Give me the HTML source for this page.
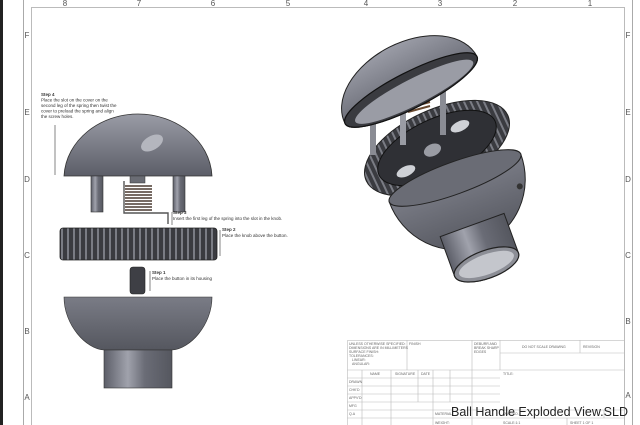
<!DOCTYPE html>
<html><head><meta charset="utf-8"><style>
html,body{margin:0;padding:0;background:#fff;}
svg{display:block;font-family:"Liberation Sans",sans-serif;}
</style></head><body>
<svg width="640" height="425" viewBox="0 0 640 425" xmlns="http://www.w3.org/2000/svg">
<defs>
<linearGradient id="dome" x1="0" y1="0" x2="0" y2="1"><stop offset="0" stop-color="#9a9ca6"/><stop offset="1" stop-color="#5c5e68"/></linearGradient>
<linearGradient id="domeb" x1="0" y1="0" x2="0" y2="1"><stop offset="0" stop-color="#7a7c86"/><stop offset="1" stop-color="#55575f"/></linearGradient>
<linearGradient id="cyl" x1="0" y1="0" x2="1" y2="0"><stop offset="0" stop-color="#5c5e68"/><stop offset=".35" stop-color="#a0a2ac"/><stop offset=".6" stop-color="#6a6c76"/><stop offset="1" stop-color="#55575f"/></linearGradient>
<pattern id="knurl" width="6" height="10" patternUnits="userSpaceOnUse"><rect width="6" height="10" fill="#3a3b40"/><rect x="1" width="2" height="10" fill="#7a7c84"/></pattern>
</defs>
<rect width="640" height="425" fill="#fff"/>
<rect x="0" y="0" width="3" height="425" fill="#222"/>
<rect x="23.5" y="-1" width="609" height="430" fill="none" stroke="#aaa" stroke-width="1"/>
<rect x="31.5" y="7.5" width="593" height="430" fill="none" stroke="#bbb" stroke-width="1"/>
<g font-size="8" fill="#555" text-anchor="middle">
<text x="65" y="6">8</text><text x="139" y="6">7</text><text x="213" y="6">6</text><text x="288" y="6">5</text><text x="366" y="6">4</text><text x="440" y="6">3</text><text x="515" y="6">2</text><text x="590" y="6">1</text>
<text x="27" y="38">F</text><text x="27" y="115">E</text><text x="27" y="182">D</text><text x="27" y="258">C</text><text x="27" y="334">B</text><text x="27" y="400">A</text>
<text x="628" y="38">F</text><text x="628" y="115">E</text><text x="628" y="182">D</text><text x="628" y="258">C</text><text x="628" y="324">B</text><text x="628" y="398">A</text>
</g>
<!-- left assembly -->
<path d="M64,176 C66,140 100,114 138,114 C176,114 210,140 212,176 Z" fill="url(#dome)" stroke="#333" stroke-width=".8"/>
<ellipse cx="152" cy="143" rx="12" ry="7" fill="#b4b6be" transform="rotate(-30 152 143)"/>
<rect x="91" y="176" width="12" height="36" fill="url(#cyl)" stroke="#333" stroke-width=".6"/>
<rect x="173" y="176" width="12" height="36" fill="url(#cyl)" stroke="#333" stroke-width=".6"/>
<rect x="130" y="176" width="15" height="7" fill="#6a6c74" stroke="#333" stroke-width=".5"/>
<g stroke="#4a3a30" stroke-width="1.6">
<line x1="125" y1="186" x2="152" y2="186"/><line x1="125" y1="189" x2="152" y2="189"/><line x1="125" y1="192" x2="152" y2="192"/><line x1="125" y1="195" x2="152" y2="195"/><line x1="125" y1="198" x2="152" y2="198"/><line x1="125" y1="201" x2="152" y2="201"/><line x1="125" y1="204" x2="152" y2="204"/><line x1="125" y1="207" x2="152" y2="207"/><line x1="125" y1="210" x2="152" y2="210"/>
</g>
<path d="M124,181 L124,213 L168,213 L168,224" fill="none" stroke="#555" stroke-width="1.4"/>
<rect x="60" y="228" width="157" height="32" rx="3" fill="url(#knurl)" stroke="#222" stroke-width=".8"/>
<rect x="130" y="267" width="15" height="27" rx="3" fill="#3e3f45" stroke="#222" stroke-width=".6"/>
<path d="M64,297 L212,297 C212,325 190,349 172,350 L104,350 C86,349 64,325 64,297 Z" fill="url(#domeb)" stroke="#333" stroke-width=".6"/>
<rect x="104" y="350" width="68" height="38" fill="url(#cyl)" stroke="#333" stroke-width=".6"/>
<g stroke="#333" stroke-width=".6"><line x1="55" y1="125" x2="55" y2="175"/><line x1="172" y1="212" x2="172" y2="225"/><line x1="220" y1="230" x2="220" y2="256"/><line x1="150" y1="271" x2="150" y2="291"/></g>
<g font-size="4.5" fill="#333">
<text x="41" y="96" font-weight="bold">Step 4</text>
<text x="41" y="101.5">Place the slot on the cover on the</text>
<text x="41" y="107">second leg of the spring then twist the</text>
<text x="41" y="112.5">cover to preload the spring and align</text>
<text x="41" y="118">the screw holes.</text>
<text x="173" y="214" font-weight="bold">Step 3</text>
<text x="173" y="220">Insert the first leg of the spring into the slot in the knob.</text>
<text x="222" y="231" font-weight="bold">Step 2</text>
<text x="222" y="237">Place the knob above the button.</text>
<text x="152" y="274" font-weight="bold">Step 1</text>
<text x="152" y="280">Place the button in its housing</text>
</g>
<!-- right 3D exploded -->
<g transform="translate(437,148) rotate(-25)">
<ellipse cx="0" cy="0" rx="78" ry="38" fill="url(#knurl)" stroke="#222"/>
<ellipse cx="0" cy="0" rx="64" ry="29" fill="#2f3035" stroke="#111"/>
<ellipse cx="-5" cy="0" rx="9" ry="6" fill="#9a9ca4"/>
<ellipse cx="-38" cy="8" rx="10" ry="5" fill="#cfd1d6"/>
<ellipse cx="30" cy="-10" rx="10" ry="5" fill="#cfd1d6"/>
</g>
<rect x="400" y="85" width="6" height="60" fill="#9a9ca4"/><rect x="440" y="75" width="6" height="60" fill="#8a8c94"/><rect x="370" y="110" width="6" height="45" fill="#8a8c94"/>
<path d="M408,100 l22,-6 M408,104 l22,-6 M408,108 l22,-6 M408,112 l22,-6" stroke="#6a4a30" stroke-width="2"/>
<g transform="translate(411,90) rotate(-27)">
<path d="M-74,0 A74,48 0 0 1 74,0 A74,18 0 0 1 -74,0 Z" fill="url(#dome)" stroke="#222"/>
<ellipse cx="0" cy="0" rx="74" ry="18" fill="#3a3b40" stroke="#111" stroke-width="1.2"/>
<ellipse cx="2" cy="3" rx="66" ry="13" fill="#9a9ca5"/>
</g>
<g transform="translate(455,178) rotate(-20)">
<path d="M-70,0 A70,72 0 0 0 70,0 Z" fill="url(#domeb)" stroke="#222"/>
<ellipse cx="0" cy="0" rx="70" ry="16" fill="#6a6c75" stroke="#222"/>
<path d="M-34,50 L-34,92 A34,14 0 0 0 34,92 L34,50 Z" fill="url(#cyl)" stroke="#222"/>
<ellipse cx="0" cy="92" rx="34" ry="14" fill="#8c8e96" stroke="#222" stroke-width="1.2"/>
<ellipse cx="0" cy="92" rx="29" ry="10" fill="#c4c6cc"/>
<circle cx="58" cy="30" r="3" fill="#333"/>
</g>
<!-- title block -->
<g stroke="#bbb" stroke-width=".6" fill="none">
<rect x="347.5" y="340.5" width="277" height="90"/>
<line x1="347" y1="370" x2="625" y2="370"/>
<line x1="407" y1="340" x2="407" y2="370"/><line x1="472" y1="340" x2="472" y2="425"/><line x1="500" y1="340" x2="500" y2="370"/><line x1="580" y1="340" x2="580" y2="353"/><line x1="500" y1="353" x2="625" y2="353"/>
<line x1="347" y1="378" x2="500" y2="378"/><line x1="347" y1="386" x2="500" y2="386"/><line x1="347" y1="394" x2="500" y2="394"/><line x1="347" y1="402" x2="500" y2="402"/><line x1="347" y1="410" x2="625" y2="410"/><line x1="347" y1="418" x2="625" y2="418"/>
<line x1="362" y1="370" x2="362" y2="425"/><line x1="391" y1="370" x2="391" y2="425"/><line x1="418" y1="370" x2="418" y2="402"/><line x1="433" y1="370" x2="433" y2="425"/><line x1="450" y1="370" x2="450" y2="402"/><line x1="604" y1="410" x2="604" y2="418"/><line x1="567" y1="418" x2="567" y2="425"/>
</g>
<g font-size="3.5" fill="#666">
<text x="349" y="345">UNLESS OTHERWISE SPECIFIED:</text><text x="349" y="349">DIMENSIONS ARE IN MILLIMETERS</text><text x="349" y="353">SURFACE FINISH:</text><text x="349" y="357">TOLERANCES:</text><text x="352" y="361">LINEAR:</text><text x="352" y="365">ANGULAR:</text>
<text x="409" y="345">FINISH</text><text x="474" y="345">DEBURR AND</text><text x="474" y="349">BREAK SHARP</text><text x="474" y="353">EDGES</text>
<text x="522" y="348">DO NOT SCALE DRAWING</text><text x="583" y="348">REVISION</text>
<text x="370" y="375">NAME</text><text x="395" y="375">SIGNATURE</text><text x="421" y="375">DATE</text><text x="503" y="375">TITLE:</text>
<text x="349" y="383">DRAWN</text><text x="349" y="391">CHK'D</text><text x="349" y="399">APPV'D</text><text x="349" y="407">MFG</text><text x="349" y="415">Q.A</text>
<text x="435" y="415">MATERIAL:</text><text x="503" y="415">DWG NO.</text><text x="435" y="424">WEIGHT:</text><text x="503" y="424">SCALE:1:1</text><text x="570" y="424">SHEET 1 OF 1</text>
</g>
<text x="451" y="416" font-size="12.5" fill="#222">Ball Handle Exploded View.SLD</text>
</svg>
</body></html>
